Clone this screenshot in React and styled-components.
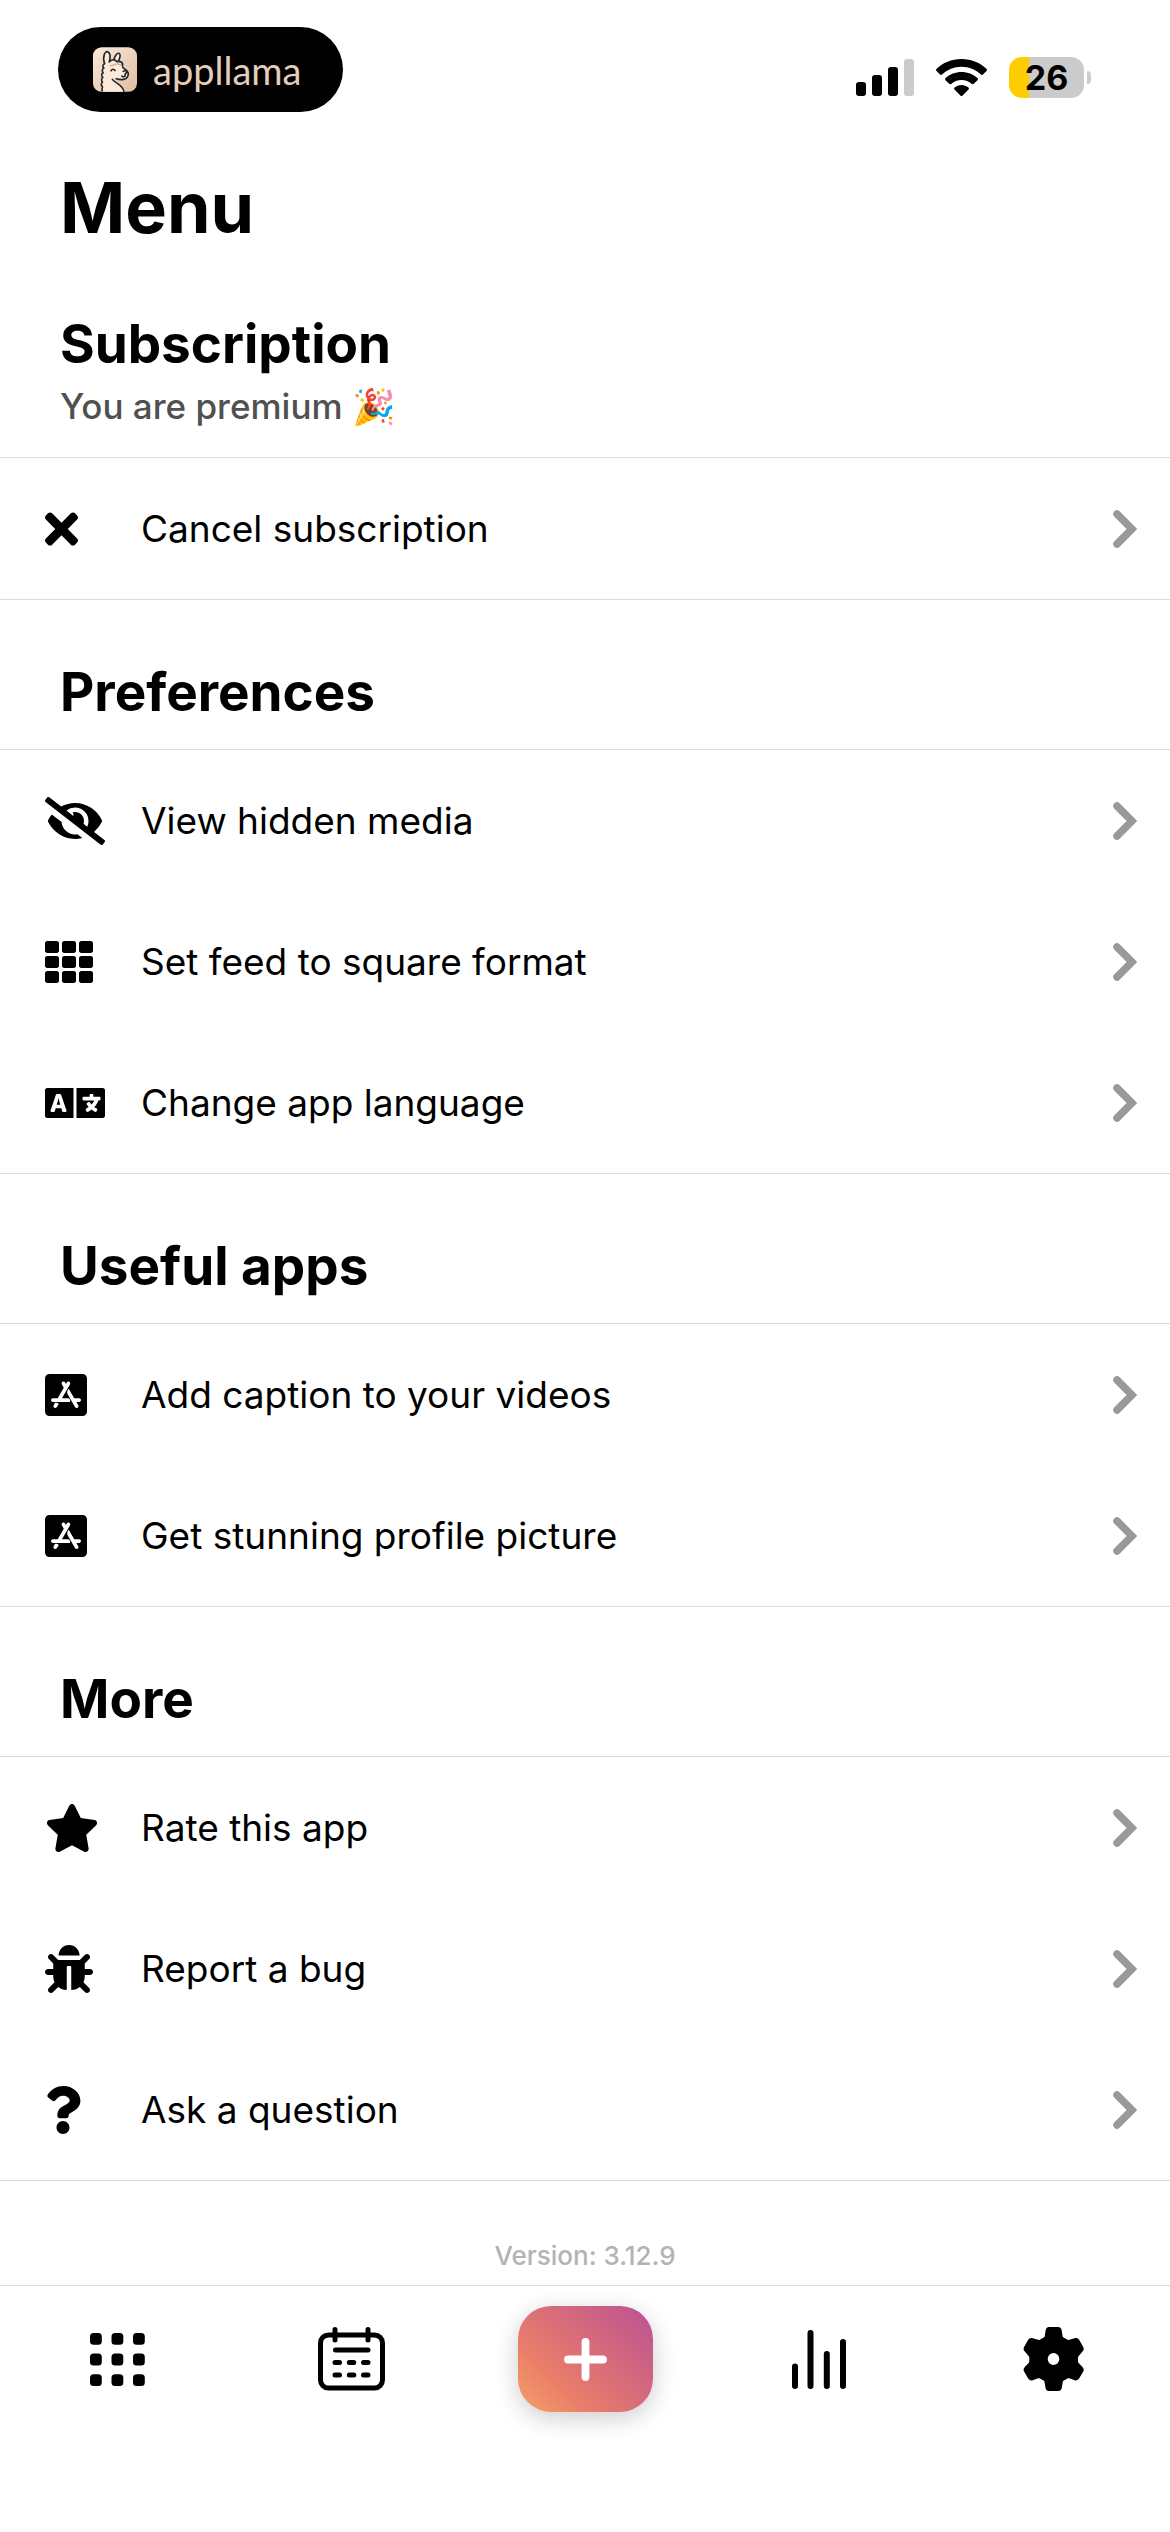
import React from "react";
import styled, { createGlobalStyle } from "styled-components";
import {
  FaAppStoreIos,
  FaBug,
  FaEyeSlash,
  FaLanguage,
  FaQuestion,
  FaStar,
  FaTh,
  FaTimes,
} from "react-icons/fa";

const GlobalStyle = createGlobalStyle`
  * {
    box-sizing: border-box;
  }

  body {
    margin: 0;
    background: #fff;
    color: #000;
    font-family: Inter, "Liberation Sans", sans-serif;
  }

  button {
    font: inherit;
    color: inherit;
    background: none;
    border: none;
    padding: 0;
    cursor: pointer;
  }
`;

const StyledPage = styled.div`
  display: flex;
  flex-direction: column;
  min-height: 100vh;
`;

const StyledStatusBar = styled.header`
  display: flex;
  justify-content: space-between;
  align-items: center;
  padding: 27px 79px 52px 58px;
`;

const StyledBrand = styled.div`
  display: flex;
  align-items: center;
  gap: 16px;
  height: 85px;
  padding: 0 42px 0 35px;
  border-radius: 43px;
  background: #000;
`;

const StyledBrandName = styled.span`
  color: #e3cdbb;
  font-family: Lato, sans-serif;
  font-size: 38px;
  line-height: 44px;
`;

const StyledIndicators = styled.div`
  display: flex;
  align-items: center;
  gap: 22px;
  padding-top: 16px;
`;

const StyledBattery = styled.div`
  display: flex;
  align-items: center;
  gap: 3px;
`;

const StyledCharge = styled.span`
  width: 75px;
  border-radius: 13px;
  background: linear-gradient(90deg, #ffcc00 27%, #cbcbcb 27%);
  font-size: 34px;
  font-weight: 700;
  line-height: 41px;
  text-align: center;
`;

const StyledBatteryTip = styled.span`
  width: 4px;
  height: 13px;
  border-radius: 0 4px 4px 0;
  background: #cbcbcb;
`;

const StyledTitle = styled.h1`
  margin: 0;
  padding: 0 60px;
  font-size: 70px;
  font-weight: 700;
  line-height: 88px;
`;

const StyledSectionHeader = styled.div`
  padding: 60px 60px 25px;
`;

const StyledHeading = styled.h2`
  margin: 0;
  font-size: 53px;
  font-weight: 700;
  line-height: 64px;
`;

const StyledNote = styled.p`
  margin: 4px 0 0;
  color: #505050;
  font-size: 35px;
  font-weight: 500;
  line-height: 52px;
`;

const StyledList = styled.ul`
  margin: 0;
  padding: 0;
  list-style-type: none;
  border-top: 1px solid #dcdcdc;
  border-bottom: 1px solid #dcdcdc;
`;

const StyledRow = styled.button`
  display: flex;
  align-items: center;
  width: 100%;
  height: 141px;
  padding: 0 33px 0 45px;
  font-size: 37px;
  line-height: 48px;
  text-align: left;
`;

const StyledRowIcon = styled.span`
  display: flex;
  width: 96px;

  & > svg {
    width: ${({ $width }) => $width}px;
    height: 48px;
  }
`;

const StyledRowLabel = styled.span`
  flex: 1;
`;

const StyledVersion = styled.p`
  margin: 0;
  padding: 59px 0 13px;
  color: #b3b3b3;
  font-size: 26px;
  font-weight: 500;
  line-height: 32px;
  text-align: center;
`;

const StyledTabBar = styled.nav`
  display: grid;
  grid-template-columns: repeat(5, 1fr);
  justify-items: center;
  align-items: center;
  padding: 20px 0 120px;
  border-top: 1px solid #dcdcdc;
`;

const StyledTab = styled.button`
  display: flex;
  align-items: center;
  justify-content: center;
  width: 100%;
  height: 106px;
`;

const StyledAddTab = styled(StyledTab)`
  width: 135px;
  border-radius: 33px;
  background: linear-gradient(45deg, #f29b68 5%, #ea7e6a 28%, #c0568f 92%);
  box-shadow: 0 6px 24px rgba(0, 0, 0, 0.2);
`;

const LlamaIcon = () => (
  <svg width="44" height="45" viewBox="0 0 134 136" fill="none" aria-hidden="true">
    <defs>
      <linearGradient id="llamaTile" x1="0" y1="0" x2="1" y2="1">
        <stop offset="0" stopColor="#fbeadb" />
        <stop offset="1" stopColor="#dfbd9f" />
      </linearGradient>
    </defs>
    <rect width="134" height="136" rx="26" fill="url(#llamaTile)" />
    <path
      d="M34 50C28 28 37 10 45 14c8 4 8 18 5 30l14-6c2-12 10-22 16-19 5 3 2 16-2 24 10 2 17 8 12 17 4 5 6 8 14 14 6 6 4 18-5 23-8 4-22 3-34-2 4 14 26 18 32 41H28c-6-30-6-60 6-86z"
      fill="#fbeadb"
    />
    <path d="M52 56c10 2 16-6 24-5 6 1 10 4 14 3" stroke="#d9a983" strokeWidth="4" strokeLinecap="round" />
    <g stroke="#23262b" strokeWidth="5" strokeLinecap="round" strokeLinejoin="round">
      <path d="M35 50C28 28 37 10 45 14c8 4 8 18 5 30" />
      <path d="M64 38c2-12 10-22 16-19 5 3 2 16-3 24" />
      <path d="M50 44c8-8 18-7 22 0 10-3 20 2 18 12M90 60c3 5 8 7 14 13 6 7 4 18-5 23-8 4-18 3-28 0" />
      <path d="M35 50c-7 5-6 10-2 14-6 4-6 10-2 14-6 4-6 10-1 14-5 4-5 10-1 14-5 5-4 11 0 15-3 4-2 8-1 12" />
      <path d="M59 98c8 12 32 16 35 37M55 72c3-6 9-6 12-1M92 74c3-3 9-3 12 1l-6 7v5c-3 4-7 4-10 1" />
    </g>
  </svg>
);

const SignalIcon = () => (
  <svg width="58" height="37" viewBox="0 0 58 37" aria-hidden="true">
    <rect y="23" width="10" height="14" rx="3" />
    <rect x="16" y="16" width="10" height="21" rx="3" />
    <rect x="32" y="8" width="10" height="29" rx="3" />
    <rect x="48" width="10" height="37" rx="3" fill="#cbcbcb" />
  </svg>
);

const WifiIcon = () => (
  <svg width="51" height="37" viewBox="0 0 51 37" aria-hidden="true">
    <path d="M25.500 0C35.500 0 44.300 3.900 50.400 9.800c.7.700.7 1.500.1 2.100l-3.600 3.600c-.6.600-1.400.6-2 0C39.800 10.700 33 7.800 25.500 7.800S11.200 10.700 6.100 15.500c-.6.600-1.400.6-2 0L.5 11.900c-.6-.6-.6-1.400.1-2.100C6.700 3.900 15.500 0 25.500 0z" />
    <path d="M25.500 13c6.200 0 11.700 2.300 15.900 6.100.7.600.7 1.400.1 2.100l-3.700 3.600c-.6.600-1.300.6-2 .1-2.800-2.500-6.400-4-10.300-4s-7.500 1.500-10.300 4c-.7.500-1.400.5-2-.1l-3.700-3.600c-.6-.7-.6-1.500.1-2.100C13.800 15.300 19.300 13 25.500 13z" />
    <path d="M25.500 26c2.600 0 5 .9 6.900 2.500.7.600.7 1.400.1 2l-5.900 5.900c-.7.700-1.500.7-2.200 0l-5.900-5.900c-.6-.6-.6-1.400.1-2C20.500 26.900 22.900 26 25.500 26z" />
  </svg>
);

const ChevronIcon = () => (
  <svg width="24" height="38" viewBox="0 0 24 38" fill="none" aria-hidden="true">
    <path d="M4 4l15 15L4 34" stroke="#999" strokeWidth="7.500" strokeLinecap="round" />
  </svg>
);

const FeedIcon = () => (
  <svg width="55" height="53" viewBox="0 0 55 53" aria-hidden="true">
    {[0, 20.6, 41.2].map((y) =>
      [0, 21.5, 43].map((x) => (
        <rect key={`${x}-${y}`} x={x} y={y} width="11.800" height="11.800" rx="3.500" />
      ))
    )}
  </svg>
);

const CalendarIcon = () => (
  <svg
    width="67"
    height="64"
    viewBox="0 0 67 64"
    fill="none"
    stroke="#000"
    strokeWidth="5"
    strokeLinecap="round"
    aria-hidden="true"
  >
    <rect x="2.500" y="8" width="62" height="53" rx="8" />
    <path d="M17 2.500v10.500M50 2.500v10.500M17.500 23h32.500" />
    <path d="M17 35.500h4.500M31.300 35.500h4.500M45.500 35.500h4.500M17 48h4.500M31.300 48h4.500M45.500 48h4.500" />
  </svg>
);

const PlusIcon = () => (
  <svg width="43" height="43" viewBox="0 0 43 43" aria-hidden="true">
    <path d="M21.500 4v35M4 21.500h35" stroke="#fff" strokeWidth="7.800" strokeLinecap="round" />
  </svg>
);

const StatsIcon = () => (
  <svg width="54" height="59" viewBox="0 0 54 59" aria-hidden="true">
    <path
      d="M3 36.500V56M18.500 3v53M34.800 24v32M51 12v44"
      stroke="#000"
      strokeWidth="6"
      strokeLinecap="round"
    />
  </svg>
);

const GearIcon = () => (
  <svg width="61" height="64" viewBox="0 0 61 64" aria-hidden="true">
    <path
      fillRule="evenodd"
      d="M26 0h9c2 0 3.200 1 3.600 3l1 6.200c.1.700.4 1.100 1 1.400l4 2.100c.6.300 1.100.3 1.700.1l5.200-1.600c1.800-.5 3.600 0 4.600 1.600l4 7c.9 1.600.8 3.200-.4 4.500l-4 4.600c-.5.500-.7 1.100-.7 1.700v3.600c0 .7.200 1.200.7 1.700l4 4.300c1.200 1.300 1.400 3 .4 4.500l-4 6.900c-1 1.600-2.700 2.100-4.500 1.600l-5.400-1.900c-.6-.2-1.100-.2-1.700.1l-3.700 2c-.6.300-.9.700-1 1.400l-1 6.200c-.4 2-1.800 3-3.700 3h-9c-2 0-3.200-1-3.600-3l-1-6.200c-.1-.7-.4-1.100-1-1.400l-3.700-2c-.6-.3-1.100-.3-1.700-.1l-5.400 1.900c-1.800.5-3.500 0-4.500-1.600l-4-6.900c-1-1.500-.8-3.200.4-4.500l4-4.300c.5-.5.700-1 .7-1.700v-3.600c0-.6-.2-1.200-.7-1.700l-4-4.600c-1.200-1.300-1.300-2.900-.4-4.500l4-7c1-1.600 2.800-2.100 4.600-1.600l5.200 1.600c.6.200 1.100.2 1.700-.1l4-2.100c.6-.3.900-.7 1-1.400l1-6.200c.4-2 1.600-3 3.300-3zm4.500 26a5.800 6 0 1 0 0 12 5.800 6 0 0 0 0-12z"
    />
  </svg>
);

// iconWidth keeps every glyph on the same 48px height and flush left
const sections = [
  {
    title: "Subscription",
    note: "You are premium 🎉",
    rows: [{ label: "Cancel subscription", icon: FaTimes, iconWidth: 33 }],
  },
  {
    title: "Preferences",
    rows: [
      { label: "View hidden media", icon: FaEyeSlash, iconWidth: 60 },
      { label: "Set feed to square format", icon: FaTh, iconWidth: 48 },
      { label: "Change app language", icon: FaLanguage, iconWidth: 60 },
    ],
  },
  {
    title: "Useful apps",
    rows: [
      { label: "Add caption to your videos", icon: FaAppStoreIos, iconWidth: 42 },
      { label: "Get stunning profile picture", icon: FaAppStoreIos, iconWidth: 42 },
    ],
  },
  {
    title: "More",
    rows: [
      { label: "Rate this app", icon: FaStar, iconWidth: 54 },
      { label: "Report a bug", icon: FaBug, iconWidth: 48 },
      { label: "Ask a question", icon: FaQuestion, iconWidth: 36 },
    ],
  },
];

const StatusBar = () => (
  <StyledStatusBar>
    <StyledBrand>
      <LlamaIcon />
      <StyledBrandName>appllama</StyledBrandName>
    </StyledBrand>
    <StyledIndicators>
      <SignalIcon />
      <WifiIcon />
      <StyledBattery>
        <StyledCharge>26</StyledCharge>
        <StyledBatteryTip />
      </StyledBattery>
    </StyledIndicators>
  </StyledStatusBar>
);

const Section = ({ title, note, rows }) => (
  <section>
    <StyledSectionHeader>
      <StyledHeading>{title}</StyledHeading>
      {note && <StyledNote>{note}</StyledNote>}
    </StyledSectionHeader>
    <StyledList>
      {rows.map(({ label, icon: Icon, iconWidth }) => (
        <li key={label}>
          <StyledRow type="button">
            <StyledRowIcon $width={iconWidth}><Icon /></StyledRowIcon>
            <StyledRowLabel>{label}</StyledRowLabel>
            <ChevronIcon />
          </StyledRow>
        </li>
      ))}
    </StyledList>
  </section>
);

const TabBar = () => (
  <StyledTabBar>
    <StyledTab type="button" aria-label="Feed"><FeedIcon /></StyledTab>
    <StyledTab type="button" aria-label="Calendar"><CalendarIcon /></StyledTab>
    <StyledAddTab type="button" aria-label="Add"><PlusIcon /></StyledAddTab>
    <StyledTab type="button" aria-label="Statistics"><StatsIcon /></StyledTab>
    <StyledTab type="button" aria-label="Menu"><GearIcon /></StyledTab>
  </StyledTabBar>
);

const App = () => (
  <StyledPage>
    <GlobalStyle />
    <StatusBar />
    <main>
      <StyledTitle>Menu</StyledTitle>
      {sections.map((section) => (
        <Section key={section.title} {...section} />
      ))}
      <StyledVersion>Version: 3.12.9</StyledVersion>
    </main>
    <TabBar />
  </StyledPage>
);

export default App;
